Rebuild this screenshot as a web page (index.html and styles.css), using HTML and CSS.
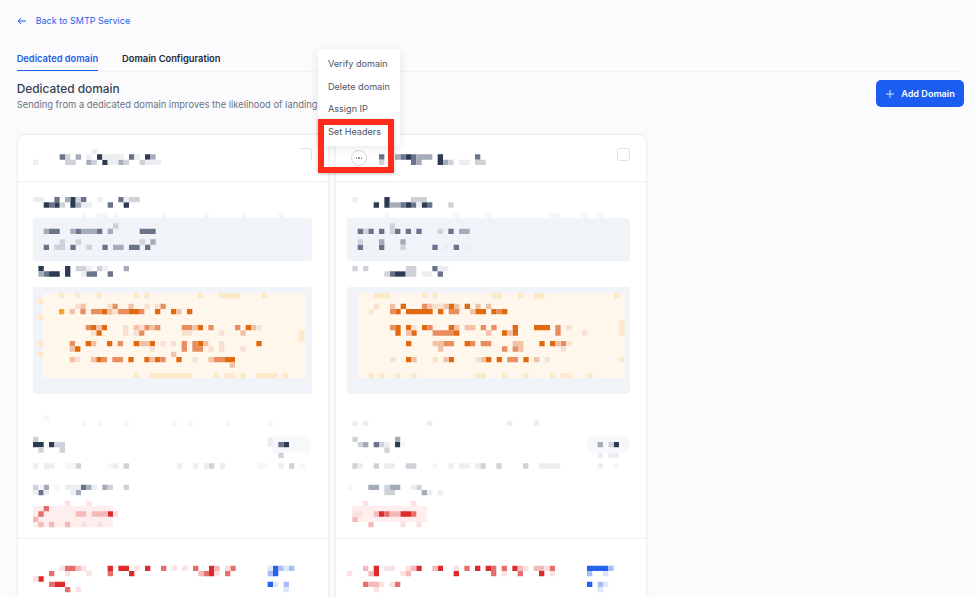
FILE: index.html
```html
<!DOCTYPE html>
<html lang="en">
<head>
<meta charset="utf-8">
<title>Dedicated domain</title>
<link rel="stylesheet" href="styles.css">
</head>
<body>
<div class="page">
  <a class="back" href="#">
    <svg class="back-icon" width="10" height="10" viewBox="0 0 10 10"><path d="M9 5H1.2M4 2 1.2 5 4 8"/></svg>
    <span>Back to SMTP Service</span>
  </a>
  <nav class="tabs">
    <a class="tab tab-active" href="#">Dedicated domain</a>
    <a class="tab" href="#">Domain Configuration</a>
  </nav>
  <header class="intro">
    <div>
      <h1 class="title">Dedicated domain</h1>
      <p class="sub">Sending from a dedicated domain improves the likelihood of landing</p>
    </div>
    <button class="add"><svg width="10" height="10" viewBox="0 0 10 10"><path d="M5 1v8M1 5h8"/></svg>Add Domain</button>
  </header>
  <div class="cards">
    <article class="card">
      <div class="head">
        <svg class="mos" width="160" height="21.33" viewBox="0 -1 30 4">
          <path class="d" d="M12 .5h1M21 .5h1M13 1.5h1"/>
          <path class="m" d="M5 .5h1M18 .5h1"/>
          <path class="g" d="M22 .5h1M8 .5h1M10 1.5h1M16 1.5h1"/>
          <path class="l" d="M6 .5h1M6 1.5h2M11 1.5h1M17 1.5h1M20 1.5h1"/>
          <path class="v" d="M11 -.5h1M10 .5h1M13 .5h4M19 .5h1M0 1.5h1M14 1.5h2M21 1.5h3"/>
        </svg>
        <span class="check check-cut"></span>
      </div>
      <div class="section">
        <svg class="mos label" width="282.67" height="21.33" viewBox="0 8 53 4">
          <path class="d" d="M7 8.5h1M2 9.5h1M4 9.5h1M7 9.5h1M17 9.5h1"/>
          <path class="m" d="M9 8.5h1M16 8.5h1M4 8.5h1M3 9.5h1M14 9.5h1"/>
          <path class="g" d="M6 8.5h1M8 9.5h1"/>
          <path class="l" d="M8 8.5h1M18 8.5h2M5 9.5h1"/>
          <path class="v" d="M0 8.5h2M12 8.5h1M17 8.5h1M9 9.5h2"/>
          <path class="w" d="M9 11.5h1M12 11.5h2M15 11.5h1M24 11.5h1M32 11.5h1M39 11.5h1M46 11.5h1"/>
        </svg>
        <div class="box box-grey">
          <svg class="mos" width="282.67" height="42.67" viewBox="0 12 53 8">
            <path class="m" d="M3 14.5h2M8 14.5h1M12 14.5h1M20 14.5h3M2 17.5h1M7 17.5h1M13 17.5h1M18 17.5h2M21 17.5h1"/>
            <path class="g" d="M2 14.5h1M7 14.5h1M9 14.5h3M14 14.5h1M22 16.5h1M15 17.5h2"/>
            <path class="l" d="M15 13.5h1M5 16.5h1M8 16.5h1M20 16.5h1M4 17.5h2M10 17.5h1"/>
          </svg>
        </div>
        <svg class="mos label2" width="160" height="10.67" viewBox="0 21 30 2">
          <path class="d" d="M1 21.5h1M6 21.5h1M3 22.5h2M6 22.5h1"/>
          <path class="m" d="M2 22.5h1M10 22.5h2M14 22.5h1"/>
          <path class="g" d="M17 21.5h1M1 22.5h1"/>
          <path class="l" d="M8 21.5h2M12 21.5h1"/>
          <path class="v" d="M10 21.5h1M13 21.5h1M9 22.5h1"/>
        </svg>
        <div class="box box-outer">
          <div class="box-warn">
            <svg class="mos" width="261.33" height="85.33" viewBox="2 26 49 16">
              <path class="y" d="M5 26.5h1M8 26.5h1M12 26.5h1M19 26.5h1M21 26.5h1M31 26.5h1M35 26.5h3M38 26.5h1M43 26.5h1M1 27.5h1M1 30.5h1M1 35.5h1M1 37.5h1M50 33.5h1M50 34.5h1M19 41.5h1M22 41.5h8M34 41.5h1M36 41.5h2M39 41.5h1M42 41.5h4M47 41.5h1"/>
              <path class="a" d="M5 29.5h1"/>
              <path class="o1" d="M13 29.5h2M18 29.5h2M23 29.5h1M26 29.5h1M29 29.5h1M11 32.5h1M13 32.5h1M31 32.5h1M40 32.5h1M12 33.5h1M10 35.5h1M14 35.5h1M19 35.5h1M22 35.5h1M31 35.5h1M42 35.5h1M8 36.5h1M12 38.5h1M18 38.5h1M21 38.5h1M23 38.5h1M27 38.5h1M36 38.5h2"/>
              <path class="o2" d="M15 28.5h1M24 28.5h1M9 29.5h1M11 29.5h2M16 29.5h2M20 29.5h1M10 32.5h1M21 32.5h1M23 32.5h1M28 32.5h2M33 32.5h1M38 32.5h1M20 33.5h1M7 35.5h1M16 35.5h1M28 35.5h1M30 35.5h1M28 36.5h1M30 36.5h2M13 38.5h1M15 38.5h2M24 38.5h1M34 38.5h2"/>
              <path class="o3" d="M9 28.5h1M18 28.5h1M7 29.5h1M14 29.5h1M27 29.5h1M12 32.5h1M19 32.5h1M22 32.5h1M30 32.5h1M41 32.5h1M39 33.5h1M11 35.5h1M20 35.5h2M32 35.5h1M7 36.5h1M26 37.5h1M7 38.5h1M11 38.5h1M22 38.5h1M33 38.5h1M37 39.5h1"/>
              <path class="o4" d="M8 28.5h1M14 28.5h1M21 28.5h1M23 28.5h1M15 29.5h1M17 32.5h1M20 32.5h1M42 32.5h1M11 33.5h1M17 33.5h1M19 33.5h1M28 33.5h2M35 33.5h1M24 35.5h1M26 35.5h1M35 35.5h1M22 36.5h1M33 36.5h1M35 36.5h1M39 36.5h1M8 38.5h1M30 38.5h1"/>
            </svg>
          </div>
        </div>
        <svg class="mos lower" width="282.67" height="144" viewBox="0 45 53 27">
          <rect class="chip" x="45" y="53" width="7" height="3"/>
          <rect class="pink" x="0" y="66" width="15" height="4"/>
          <path class="d" d="M0 54.5h2M3 54.5h1M47 54.5h1"/>
          <path class="m" d="M46 54.5h1M9 62.5h1M1 63.5h1"/>
          <path class="g" d="M2 62.5h1M10 62.5h1M13 62.5h1M8 63.5h1"/>
          <path class="l" d="M0 53.5h1M4 54.5h2M1 55.5h1M5 55.5h1M46 56.5h1M8 58.5h1M17 58.5h1M33 58.5h1M48 58.5h1M0 62.5h1M14 62.5h1M17 62.5h1"/>
          <path class="v" d="M44 53.5h1M44 54.5h1M0 58.5h1M2 58.5h2M15 58.5h1M27 58.5h1M30 58.5h1M32 58.5h1M35 58.5h1M46 58.5h1M6 62.5h3M11 62.5h1M0 63.5h1M2 63.5h1M7 63.5h1"/>
          <path class="w" d="M2 49.5h1M9 50.5h1M12 50.5h1M17 50.5h1M26 50.5h1M29 50.5h1M36 50.5h1M44 50.5h1M6 58.5h2M14 58.5h1M42 58.5h2M50 58.5h1M1 62.5h1M4 62.5h1"/>
          <path class="r1" d="M14 67.5h1"/>
          <path class="r2" d="M2 66.5h1M1 67.5h1"/>
          <path class="r3" d="M8 67.5h2M11 67.5h3M0 68.5h1M1 69.5h1M3 69.5h1M6 69.5h1"/>
          <path class="r4" d="M6 65.5h1M10 65.5h1M15 67.5h1M9 69.5h1M12 69.5h1"/>
        </svg>
      </div>
      <div class="section section-links">
        <svg class="mos" width="282.67" height="64" viewBox="0 72 53 12">
          <path class="r1" d="M14 77.5h1M16 77.5h2M21 77.5h1M33 77.5h1M18 78.5h1M33 78.5h1M1 79.5h1M4 80.5h2"/>
          <path class="r2" d="M6 77.5h2M24 77.5h1M30 77.5h1M37 77.5h1M3 78.5h1M14 78.5h1M32 78.5h1M36 78.5h1M3 80.5h1M6 81.5h1"/>
          <path class="r3" d="M8 77.5h1M34 77.5h1M31 78.5h1"/>
          <path class="r4" d="M5 77.5h1M9 77.5h1M19 77.5h1M26 77.5h1M28 77.5h1M36 77.5h1M6 78.5h1M10 78.5h1M34 78.5h1M0 79.5h1M8 81.5h1"/>
          <path class="b1" d="M45 77.5h1M45 78.5h1M44 80.5h1"/>
          <path class="b2" d="M46 77.5h1M48 77.5h1M44 78.5h1M47 80.5h1"/>
          <path class="b3" d="M44 77.5h1M47 77.5h1M45 80.5h1M47 81.5h1"/>
        </svg>
      </div>
    </article>

    <article class="card card-wide">
      <div class="head">
        <svg class="mos" width="160" height="21.33" viewBox="0 -1 30 4">
          <path class="d" d="M11 .5h1M17 .5h1M17 1.5h1"/>
          <path class="m" d="M6 .5h1M10 .5h1M12 .5h1M24 .5h1M12 1.5h1"/>
          <path class="g" d="M9 .5h1M13 .5h3M13 1.5h1M18 1.5h1"/>
          <path class="l" d="M6 1.5h1M19 1.5h1M24 1.5h2"/>
          <path class="v" d="M21 1.5h2"/>
        </svg>
        <span class="check"></span>
        <button class="more" aria-label="More"><i></i><i></i><i></i></button>
      </div>
      <div class="section">
        <svg class="mos label" width="282.67" height="21.33" viewBox="0 8 53 4">
          <path class="d" d="M7 8.5h1M5 9.5h1M7 9.5h1M11 9.5h1M14 9.5h1"/>
          <path class="m" d="M10 9.5h1M12 9.5h1M15 9.5h1"/>
          <path class="g" d="M8 9.5h2"/>
          <path class="l" d="M12 8.5h3M19 9.5h1"/>
          <path class="v" d="M1 8.5h1M13 9.5h1"/>
          <path class="w" d="M7 11.5h1M20 11.5h1M26 11.5h1M38 11.5h2M44 11.5h1M47 11.5h1"/>
        </svg>
        <div class="box box-grey">
          <svg class="mos" width="282.67" height="42.67" viewBox="0 12 53 8">
            <path class="m" d="M2 14.5h1M4 14.5h1M6 14.5h1M9 14.5h1M11 14.5h1M13 14.5h1M19 14.5h1M2 17.5h1M6 17.5h1M16 17.5h1M20 17.5h1"/>
            <path class="g" d="M21 14.5h2M6 16.5h1M10 16.5h1"/>
            <path class="l" d="M8 13.5h1M3 14.5h1M8 14.5h1M17 14.5h1M2 16.5h1M10 17.5h1"/>
            <path class="v" d="M3 17.5h1M18 17.5h1M22 17.5h1"/>
          </svg>
        </div>
        <svg class="mos label2" width="160" height="10.67" viewBox="0 21 30 2">
          <path class="d" d="M9 22.5h2"/>
          <path class="m" d="M16 21.5h1M8 22.5h1M17 22.5h1"/>
          <path class="l" d="M1 21.5h1M3 21.5h1M11 21.5h2M7 22.5h1M11 22.5h2"/>
          <path class="v" d="M17 21.5h2M14 22.5h2"/>
        </svg>
        <div class="box box-outer">
          <div class="box-warn">
            <svg class="mos" width="266.67" height="85.33" viewBox="2 26 50 16">
              <path class="y" d="M5 26.5h3M14 26.5h1M16 26.5h1M27 26.5h2M32 26.5h1M35 26.5h2M50 26.5h1M4 29.5h1M51 31.5h1M51 32.5h1M51 33.5h1M51 38.5h1M4 41.5h1M6 41.5h1M9 41.5h1M12 41.5h1M24 41.5h2M29 41.5h1M33 41.5h1M38 41.5h1M40 41.5h2M45 41.5h1"/>
              <path class="o1" d="M10 28.5h1M19 28.5h1M22 28.5h1M9 29.5h1M11 29.5h5M17 29.5h1M24 29.5h2M27 29.5h1M29 29.5h1M9 32.5h1M11 32.5h1M14 32.5h1M19 32.5h1M31 32.5h1M35 32.5h3M9 33.5h1M12 33.5h1M20 33.5h1M29 33.5h1M31 33.5h1M11 35.5h1M22 35.5h1M36 35.5h1M38 35.5h1M11 38.5h1M19 38.5h1M26 38.5h1M28 38.5h1M33 38.5h1"/>
              <path class="o2" d="M14 28.5h1M8 29.5h1M19 29.5h2M28 29.5h1M8 32.5h1M15 32.5h1M25 32.5h1M27 32.5h1M39 32.5h1M16 33.5h4M39 33.5h1M18 35.5h2M23 35.5h1M25 35.5h2M40 35.5h1M29 36.5h1M31 36.5h1M30 38.5h2"/>
              <path class="o3" d="M8 28.5h1M15 28.5h1M18 28.5h1M20 28.5h1M24 28.5h1M26 28.5h1M23 29.5h1M20 32.5h1M22 32.5h2M11 33.5h1M26 33.5h1M30 33.5h1M16 35.5h2M31 35.5h2M39 35.5h1M17 36.5h1M32 36.5h1M12 38.5h1M18 38.5h1M25 38.5h1M35 38.5h1"/>
              <path class="o4" d="M5 28.5h1M16 28.5h2M12 32.5h1M41 32.5h1M44 33.5h1M41 35.5h1M40 36.5h1M8 38.5h1M16 38.5h1M24 38.5h1M37 38.5h1"/>
            </svg>
          </div>
        </div>
        <svg class="mos lower" width="282.67" height="144" viewBox="0 45 53 27">
          <rect class="chip" x="45" y="53" width="8" height="3" rx=".8"/>
          <rect class="pink" x="1" y="66" width="14" height="3"/>
          <path class="d" d="M9 54.5h1M50 54.5h1"/>
          <path class="m" d="M5 54.5h1"/>
          <path class="g" d="M9 53.5h1M3 54.5h1M47 54.5h1M4 62.5h2M8 62.5h2M14 63.5h1"/>
          <path class="l" d="M1 53.5h1M2 54.5h1M6 54.5h1M49 54.5h1M7 55.5h1M1 58.5h1M5 58.5h1M11 58.5h2M25 58.5h1M28 58.5h1M33 58.5h1M7 62.5h1M13 62.5h1M7 63.5h2"/>
          <path class="v" d="M1 50.5h1M3 50.5h1M15 50.5h1M30 50.5h1M35 50.5h1M7 54.5h1M47 56.5h1M49 56.5h2M2 58.5h1M7 58.5h2M19 58.5h1M21 58.5h2M24 58.5h1M36 58.5h4M47 58.5h1M12 62.5h1M15 63.5h1M17 63.5h1"/>
          <path class="w" d="M10 54.5h1M16 58.5h1M50 58.5h1M0 62.5h1"/>
          <path class="r1" d="M6 67.5h1M10 67.5h2"/>
          <path class="r2" d="M7 67.5h1M12 67.5h1"/>
          <path class="r3" d="M8 67.5h2M5 67.5h1M1 68.5h1M4 69.5h1"/>
          <path class="r4" d="M3 65.5h1M12 65.5h1M1 67.5h2M10 69.5h1M13 69.5h1"/>
        </svg>
      </div>
      <div class="section section-links">
        <svg class="mos" width="282.67" height="64" viewBox="0 72 53 12">
          <path class="r1" d="M5 77.5h1M13 77.5h1M17 77.5h1M24 77.5h1M26 77.5h1M31 77.5h1M5 78.5h1M20 78.5h1M36 78.5h1"/>
          <path class="r2" d="M22 77.5h1M27 77.5h1M29 77.5h1M38 77.5h1M27 78.5h1M32 78.5h1M3 80.5h1M9 80.5h1"/>
          <path class="r3" d="M3 77.5h1M12 77.5h1M16 77.5h1M32 77.5h1M35 77.5h2M4 78.5h1M11 78.5h1M4 80.5h2"/>
          <path class="r4" d="M7 77.5h2M11 77.5h1M20 77.5h1M33 77.5h1M37 77.5h1M0 78.5h1M10 78.5h1M29 78.5h1M38 78.5h1M6 80.5h1M8 80.5h1M5 81.5h1"/>
          <path class="b1" d="M45 77.5h4M45 80.5h1"/>
          <path class="b2" d="M49 77.5h1M45 78.5h1M47 80.5h1"/>
          <path class="b3" d="M48 78.5h1M48 80.5h1M47 81.5h1"/>
        </svg>
      </div>
    </article>
  </div>

  <ul class="menu">
    <li>Verify domain</li>
    <li>Delete domain</li>
    <li>Assign IP</li>
    <li>Set Headers</li>
  </ul>
  <div class="callout"></div>
</div>
</body>
</html>
```
FILE: styles.css
```css
* { box-sizing: border-box; }
html, body { margin: 0; height: 100%; }
body {
  overflow: hidden;
  background: #fbfbfd;
  font-family: Inter, "Liberation Sans", sans-serif;
  color: #1f2937;
}
.page {
  position: relative;
  height: 597px;
  overflow: hidden;
  padding: 14px 13px 0 16.67px;
}

/* back link */
.back {
  display: flex;
  align-items: center;
  gap: 9px;
  height: 13px;
  font-size: 9px;
  font-weight: 400;
  line-height: 13px;
  color: #1d5fe8;
  text-decoration: none;
}
.back-icon { fill: none; stroke: #1d5fe8; stroke-width: 1; }

/* tabs */
.tabs {
  display: flex;
  gap: 24px;
  height: 45px;
  padding-top: 17px;
  border-bottom: 1px solid #f3f4f7;
}
.tab {
  height: 27px;
  padding-top: 8px;
  font-size: 9.3px;
  font-weight: 600;
  line-height: 13px;
  color: #1f2937;
  text-decoration: none;
}
.tab-active {
  color: #1d5fe8;
  border-bottom: 1.5px solid #1d5fe8;
}

/* heading row */
.intro {
  display: flex;
  justify-content: space-between;
  align-items: flex-start;
  height: 62px;
  padding-top: 8px;
}
.title {
  margin: 0;
  font-size: 11.9px;
  font-weight: 500;
  line-height: 18px;
  color: #374151;
}
.sub {
  margin: 0;
  font-size: 9.4px;
  line-height: 14px;
  color: #6b7280;
}
.add {
  display: flex;
  align-items: center;
  justify-content: center;
  gap: 6px;
  width: 88px;
  height: 27px;
  border: 0;
  border-radius: 5px;
  background: #1a5df0;
  color: #fff;
  font: 600 9.1px/13px Inter, "Liberation Sans", sans-serif;
}
.add svg { fill: none; stroke: #d5e1ff; stroke-width: 1; }

/* cards */
.cards { display: flex; gap: 6px; }
.card {
  flex: 0 0 312px;
  height: 480px;
  border: 1px solid #eef0f4;
  border-bottom: 0;
  border-radius: 8px 8px 0 0;
  background: #fff;
  box-shadow: 0 0 3px rgba(17, 24, 39, .05);
  --box-left: 15px;
  --box-width: 279px;
  --warn-width: 261.33px;
}
.card-wide {
  --box-left: 11.67px;
  --box-width: 282.67px;
  --warn-width: 266.67px;
}
.head {
  position: relative;
  display: flex;
  justify-content: space-between;
  align-items: flex-start;
  height: 47px;
  padding: 13.67px 16px 0 var(--box-left);
  border-bottom: 1px solid #eef0f5;
}
.check {
  flex: none;
  width: 13px;
  height: 13px;
  margin-top: -1px;
  border: 1px solid #dfe2e8;
  border-radius: 3px;
}
.check-cut { border-left-color: transparent; border-bottom-color: transparent; }
.more {
  position: absolute;
  left: 15.5px;
  top: 15px;
  display: flex;
  align-items: center;
  justify-content: center;
  gap: 1.2px;
  width: 16px;
  height: 16px;
  padding: 0;
  border: 1px solid #d5d8df;
  border-radius: 50%;
  background: #fff;
}
.more i { width: 1.4px; height: 1.4px; border-radius: 50%; background: #7b8494; }
.section { padding: 14.67px 0 0 var(--box-left); }
.section-links { padding-top: 0; border-top: 1px solid #eef0f6; }

/* redacted mosaic */
.mos { display: block; flex: none; overflow: visible; filter: blur(.45px); }
.mos path { fill: none; stroke-width: 1; }
.label2 { margin-top: 5.33px; }
.chip { fill: #f7f8fb; }
.pink { fill: #feeeee; }
.d { stroke: #2c3a52; }
.m { stroke: #69748a; }
.g { stroke: #a4abb9; }
.l { stroke: #cfd2d9; }
.v { stroke: #eceef1; }
.w { stroke: #f5f6f8; }
.y { stroke: #fde8c9; }
.a { stroke: #f3a72a; }
.o1 { stroke: #e1690f; }
.o2 { stroke: #e88e5f; }
.o3 { stroke: #f2c2a6; }
.o4 { stroke: #f9e1d2; }
.r1 { stroke: #dd2a2a; }
.r2 { stroke: #e56f6f; }
.r3 { stroke: #f4b9b9; }
.r4 { stroke: #fbe1e1; }
.b1 { stroke: #2563eb; }
.b2 { stroke: #a9bdf7; }
.b3 { stroke: #dde6fc; }

.box { width: var(--box-width); }
.box-grey { height: 42.67px; background: #f0f4f9; border-radius: 3px; }
.box-outer {
  height: 106.67px;
  margin-top: 10.67px;
  padding: 5.33px 0 0 10.67px;
  background: #f0f4f9;
  border-radius: 3px;
}
.box-warn { width: var(--warn-width); height: 85.33px; background: #fff6ec; }

/* popover menu and annotation */
.menu {
  position: absolute;
  left: 318px;
  top: 49px;
  width: 82px;
  height: 97px;
  margin: 0;
  padding: 4px 0 0 10px;
  list-style: none;
  background: #fff;
  border-radius: 3px;
  box-shadow: 0 2px 10px rgba(31, 41, 55, .1);
  font-size: 9.1px;
  line-height: 22.67px;
  color: #4b5568;
}
.callout {
  position: absolute;
  left: 318px;
  top: 118.5px;
  width: 75.5px;
  height: 54px;
  border: 6.5px solid #fe2c1d;
  box-shadow: 0 1px 3px rgba(0, 0, 0, .25);
}
```
